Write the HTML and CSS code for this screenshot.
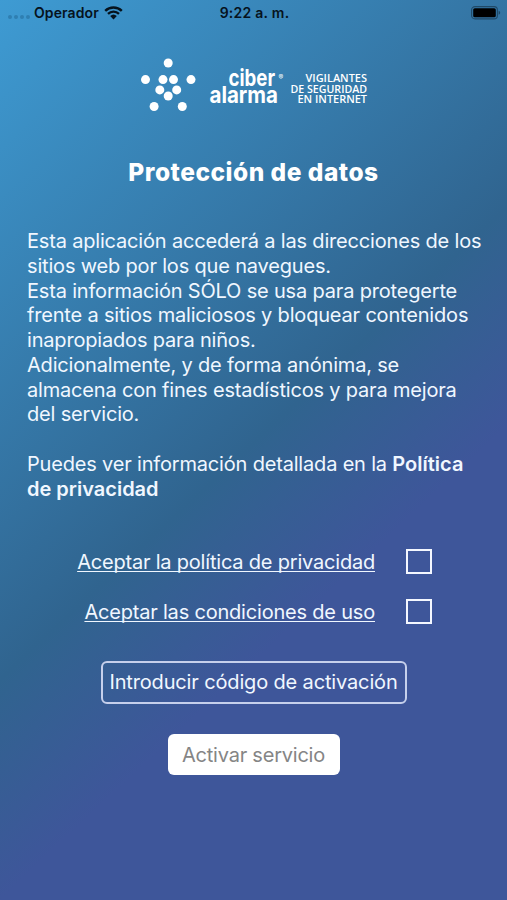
FILE: index.html
```html
<!DOCTYPE html>
<html lang="es">
<head>
<meta charset="utf-8">
<title>Ciber Alarma</title>
<link rel="stylesheet" href="styles.css">
</head>
<body>
<header class="status">
  <div class="carrier">
    <span class="signal"><i></i><i></i><i></i><i></i></span>
    <span class="operator">Operador</span>
    <svg class="wifi" width="19" height="14" viewBox="0 0 19 14"><path d="M1.2 4.9a12 12 0 0 1 16.6 0M4 7.8a8 8 0 0 1 11 0" fill="none" stroke="#06131d" stroke-width="2.4"/><path d="M6.2 10.1a4.8 4.8 0 0 1 6.6 0L9.5 13.4z" fill="#06131d"/></svg>
  </div>
  <time class="clock">9:22 a. m.</time>
  <svg class="battery" width="30" height="14" viewBox="0 0 30 14"><rect x=".6" y=".6" width="25.8" height="12.3" rx="3.4" fill="none" stroke="#06131d" stroke-opacity=".45" stroke-width="1.1"/><rect x="2.2" y="2.2" width="22.6" height="9.1" rx="1.6" fill="#000"/><path d="M27.6 4.8q1.6.6 1.6 2t-1.6 2z" fill="#06131d" fill-opacity=".45"/></svg>
</header>
<main>
  <svg class="logo" width="240" height="64" viewBox="134 52 240 64" fill="#fff">
    <circle cx="168.2" cy="63" r="4.5"/><circle cx="145.5" cy="79.6" r="4.5"/><circle cx="163" cy="79.6" r="4.5"/><circle cx="173.5" cy="79.6" r="4.5"/><circle cx="191" cy="79.6" r="4.5"/><circle cx="159.8" cy="89.9" r="4.5"/><circle cx="176.7" cy="89.9" r="4.5"/><circle cx="168.2" cy="96" r="4.5"/><circle cx="154.1" cy="106.5" r="4.5"/><circle cx="182.3" cy="106.5" r="4.5"/>
    <g class="brand">
      <text x="228.5" y="86" textLength="46.5" lengthAdjust="spacingAndGlyphs">ciber</text>
      <text x="209.5" y="103.3" textLength="68.5" lengthAdjust="spacingAndGlyphs">alarma</text>
    </g>
    <text class="mark" x="278.5" y="79.5">®</text>
    <g class="tagline">
      <text x="305.5" y="82" textLength="61.5" lengthAdjust="spacingAndGlyphs">VIGILANTES</text>
      <text x="290.5" y="92.5" textLength="76.5" lengthAdjust="spacingAndGlyphs">DE SEGURIDAD</text>
      <text x="297.5" y="103" textLength="69.5" lengthAdjust="spacingAndGlyphs">EN INTERNET</text>
    </g>
  </svg>
  <h1>Protección de datos</h1>
  <p class="copy">Esta aplicación accederá a las direcciones de los<br>sitios web por los que navegues.<br>Esta información SÓLO se usa para protegerte<br>frente a sitios maliciosos y bloquear contenidos<br>inapropiados para niños.<br>Adicionalmente, y de forma anónima, se<br>almacena con fines estadísticos y para mejora<br>del servicio.<br><br>Puedes ver información detallada en la <b>Política<br>de privacidad</b></p>
  <div class="consents">
    <div class="consent"><a>Aceptar la política de privacidad</a><span class="box"></span></div>
    <div class="consent"><a>Aceptar las condiciones de uso</a><span class="box"></span></div>
  </div>
  <button class="code">Introducir código de activación</button>
  <button class="activate">Activar servicio</button>
</main>
</body>
</html>
```
FILE: styles.css
```css
* { box-sizing: border-box; }
body {
  margin: 0;
  height: 900px;
  overflow: hidden;
  font-family: Inter, "Liberation Sans", sans-serif;
  color: #f0f7ff;
  background: linear-gradient(137deg, #3e9bd3 0%, #30648f 49.5%, #3e569a 65.5%, #3e569a 100%);
}
.status {
  display: grid;
  grid-template-columns: 1fr auto 1fr;
  align-items: center;
  height: 26px;
  padding: 0 6px 0 8px;
  color: #06131d;
  font-size: 14px;
  font-weight: 600;
}
.carrier { display: flex; align-items: center; }
.signal { display: flex; gap: 2px; margin: 8px 4px 0 0; }
.signal i { width: 4px; height: 4px; border-radius: 2px; background: #2f7fb1; }
.operator { letter-spacing: .1px; padding-bottom: 1px; }
.wifi { margin-left: 5px; }
.clock { letter-spacing: .25px; padding-bottom: 2px; }
.battery { justify-self: end; }
main { display: flex; flex-direction: column; align-items: center; }
.logo { margin-top: 26px; }
.brand { font: 700 23.5px Inter, sans-serif; }
.mark { font: 7px Inter, sans-serif; }
.tagline { font: 600 10.8px "Open Sans", sans-serif; }
h1 {
  margin: 41px 0 0;
  font-size: 24.5px;
  line-height: 30px;
  font-weight: 800;
  letter-spacing: .5px;
  color: #fff;
  white-space: nowrap;
}
.copy {
  align-self: stretch;
  margin: 42px 0 0 27px;
  font-size: 20px;
  line-height: 24.75px;
  letter-spacing: -.18px;
  white-space: nowrap;
}
.copy b { font-weight: 600; letter-spacing: 0; }
.consents {
  align-self: stretch;
  display: flex;
  flex-direction: column;
  gap: 25px;
  margin: 48px 75px 0 0;
}
.consent {
  display: flex;
  justify-content: flex-end;
  align-items: center;
  gap: 31px;
  height: 25px;
  font-size: 20px;
  letter-spacing: -.2px;
}
.consent a { text-decoration: underline; text-decoration-thickness: 1.4px; text-underline-offset: 2px; text-decoration-skip-ink: none; }
.box { width: 26px; height: 25px; border: 2px solid #f4f7ff; }
button { font: 20px Inter, "Liberation Sans", sans-serif; letter-spacing: -.15px; padding: 0; white-space: nowrap; }
.code {
  margin-top: 37px;
  width: 306px;
  height: 43px;
  padding-bottom: 2px;
  border: 2px solid #c6d0ec;
  border-radius: 6px;
  background: none;
  color: #f0f7ff;
}
.activate {
  margin-top: 30px;
  width: 172px;
  height: 41px;
  border: 0;
  border-radius: 6px;
  background: #fff;
  color: #858585;
  letter-spacing: -.22px;
}
```
